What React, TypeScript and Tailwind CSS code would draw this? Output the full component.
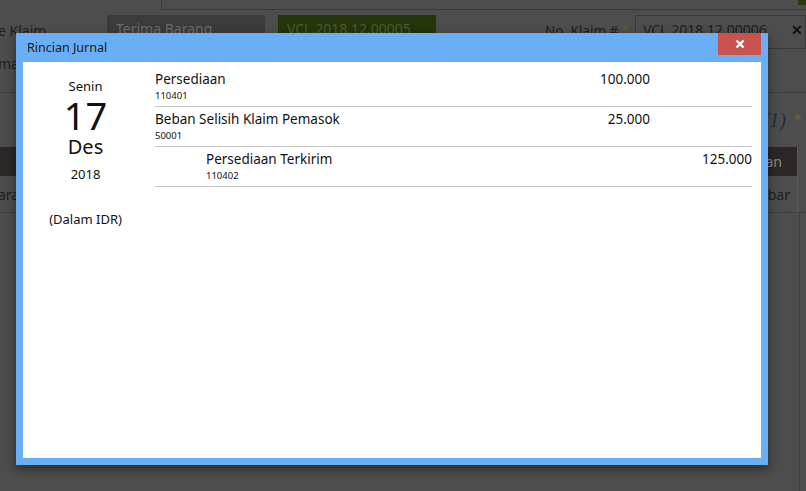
import React from "react";

const entries = [
  { name: "Persediaan", code: "110401", debit: "100.000", credit: "", indent: false },
  { name: "Beban Selisih Klaim Pemasok", code: "50001", debit: "25.000", credit: "", indent: false },
  { name: "Persediaan Terkirim", code: "110402", debit: "", credit: "125.000", indent: true },
];

export default function App() {
  return (
    <div className="relative w-[806px] h-[491px] overflow-hidden bg-[#4d4d4d] font-['Noto_Sans',sans-serif]">
      {/* underlying page (dimmed) */}
      <div className="flex flex-col">
        <div className="flex h-[10px]">
          <div className="w-[161px]" />
          <div className="flex-1 border-l border-b border-[#3a3a3a]" />
          <div className="absolute right-0 top-0 w-[8px] h-[5px] bg-[#2a3a10]" />
        </div>
        <div className="flex items-start pt-[5px] h-[45px]">
          <div className="w-[109px] pt-[7px] text-[14px] leading-[18px] text-[#1e1e1e] -ml-[2px]">e Klaim</div>
          <div className="w-[158px] h-[30px] bg-[#3b3b3b] pl-[9px] pt-[5px] text-[14px] leading-[18px] text-[#6a6a6a]">Terima Barang</div>
          <div className="ml-[13px] w-[158px] h-[30px] bg-[#243509] pl-[9px] pt-[5px] text-[14px] leading-[18px] text-[#4f5a34]">VCL.2018.12.00005</div>
          <div className="ml-[109px] w-[90px] pt-[7px] text-[13.5px] leading-[18px] text-[#1e1e1e] whitespace-nowrap">
            No. Klaim # <span className="text-[#6b5a3a]">*</span>
          </div>
          <div className="flex-1 h-[34px] border border-[#3a3a3a] pl-[7px] pt-[5px] flex text-[14px] leading-[18px] text-[#1e1e1e]">
            <span className="flex-1">VCL.2018.12.00006</span>
            <span className="w-[14px] font-bold text-[#111]">✕</span>
          </div>
        </div>
        <div className="h-[37px] text-[14px] leading-[18px] text-[#1e1e1e] -ml-[2px]">ma</div>
        <div className="border-t border-[#3e3e3e] h-[55px] flex justify-end items-center pr-[4px] text-[#203040] italic font-['Liberation_Serif',serif] text-[20px] whitespace-nowrap">
          (1) <span className="ml-[8px] not-italic text-[#7a6226] text-[16px]">*</span>
        </div>
        <div className="flex h-[29px]">
          <div className="flex-1 bg-[#2b2726] flex justify-end items-center pr-[15px] text-[14px] text-[#8a8a8a]">an</div>
          <div className="w-[9px] border-l border-dotted border-[#666]" />
        </div>
        <div className="flex h-[36px]">
          <div className="flex-1 flex justify-between items-center text-[14px] text-[#1e1e1e] -ml-[2px] pr-[7px]">
            <span>ara</span>
            <span>bar</span>
          </div>
          <div className="w-[9px] border-l border-dotted border-[#666]" />
        </div>
        <div className="border-t border-[#3e3e3e]" />
      </div>
      <div className="absolute right-[6px] top-[212px] bottom-0 border-l border-[#3e3e3e]" />

      {/* modal */}
      <div className="absolute left-[16px] top-[33px] w-[752px] h-[432px] bg-[#6aaef5] flex flex-col shadow-[0_4px_10px_rgba(0,0,0,0.45)]">
        <div className="h-[29px] flex items-start justify-between pl-[11px] pr-[7px]">
          <span className="mt-[6px] text-[12.5px] leading-[17px] text-[#1a1a1a]">Rincian Jurnal</span>
          <button className="w-[43px] h-[22px] bg-[#c9534f] flex items-center justify-center">
            <svg width="10" height="10" viewBox="0 0 10 10">
              <path d="M1.5 1.5 L8.5 8.5 M8.5 1.5 L1.5 8.5" stroke="white" strokeWidth="2.4" />
            </svg>
          </button>
        </div>
        <div className="mx-[7px] mb-[7px] flex-1 bg-white flex text-[#111]">
          <div className="w-[125px] flex flex-col items-center pt-[15px]">
            <div className="text-[13px] leading-[18px]">Senin</div>
            <div className="text-[38px] leading-[38px] mt-[1px]">17</div>
            <div className="text-[20px] leading-[24px] mt-[1px]">Des</div>
            <div className="text-[13px] leading-[18px] mt-[6px]">2018</div>
            <div className="text-[13px] leading-[18px] mt-[27px]">(Dalam IDR)</div>
          </div>
          <div className="flex-1 ml-[7px] mr-[9px] pt-[5px]">
            {entries.map((e) => (
              <div key={e.code} className="flex border-b border-[#c4c4c4] pt-[3px] pb-[4px]">
                <div className={`flex-1 ${e.indent ? "pl-[51px]" : ""}`}>
                  <div className="text-[13.5px] leading-[19px]">{e.name}</div>
                  <div className="text-[9.5px] leading-[13px]">{e.code}</div>
                </div>
                <div className="w-[102px] text-right text-[13.5px] leading-[19px]">{e.debit}</div>
                <div className="w-[102px] text-right text-[13.5px] leading-[19px]">{e.credit}</div>
              </div>
            ))}
          </div>
        </div>
      </div>
    </div>
  );
}
